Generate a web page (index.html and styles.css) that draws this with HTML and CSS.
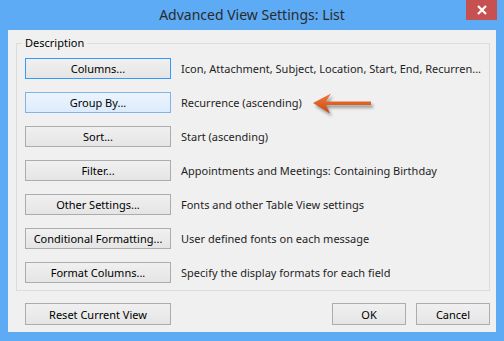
FILE: index.html
```html
<!DOCTYPE html>
<html lang="en">
<head>
    <meta charset="UTF-8">
    <title>Advanced View Settings: List</title>
    <link rel="stylesheet" href="styles.css">
</head>
<body>
    <div class="titlebar">
        <span></span>
        <h1>Advanced View Settings: List</h1>
        <div class="close">
            <svg width="10" height="10" viewBox="0 0 10 10"><path d="M1 1 L9 9 M9 1 L1 9" stroke="#fff" stroke-width="2.2"/></svg>
        </div>
    </div>

    <div class="content">
        <div class="group">
            <span class="legend">Description</span>

            <div class="row">
                <button class="btn focused">Columns...</button>
                <span class="desc">Icon, Attachment, Subject, Location, Start, End, Recurren...</span>
            </div>
            <div class="row">
                <button class="btn hover">Group By...</button>
                <span class="desc">Recurrence (ascending)</span>
                <svg class="arrow" width="64" height="26" viewBox="0 0 64 26">
                    <defs>
                        <linearGradient id="ag" x1="0" y1="0" x2="0" y2="1">
                            <stop offset="0" stop-color="#f07a3a"/>
                            <stop offset="1" stop-color="#c84a10"/>
                        </linearGradient>
                    </defs>
                    <path d="M1 13 L19 3.5 L14 11.5 L59 11.5 L59 15 L14 15 L18 23.5 Z" fill="url(#ag)"/>
                </svg>
            </div>
            <div class="row">
                <button class="btn">Sort...</button>
                <span class="desc">Start (ascending)</span>
            </div>
            <div class="row">
                <button class="btn">Filter...</button>
                <span class="desc">Appointments and Meetings: Containing Birthday</span>
            </div>
            <div class="row">
                <button class="btn">Other Settings...</button>
                <span class="desc">Fonts and other Table View settings</span>
            </div>
            <div class="row">
                <button class="btn">Conditional Formatting...</button>
                <span class="desc">User defined fonts on each message</span>
            </div>
            <div class="row">
                <button class="btn">Format Columns...</button>
                <span class="desc">Specify the display formats for each field</span>
            </div>
        </div>

        <div class="footer">
            <button class="btn">Reset Current View</button>
            <span class="spacer"></span>
            <button class="btn small">OK</button>
            <button class="btn small">Cancel</button>
        </div>
    </div>
</body>
</html>
```
FILE: styles.css
```css
body {
    margin: 0;
    width: 504px;
    height: 341px;
    overflow: hidden;
    background-color: #5eabf5;
    font-family: 'Noto Sans', 'Segoe UI', sans-serif;
    font-size: 11px;
    color: #1e1e1e;
}
.titlebar {
    height: 30px;
    display: grid;
    grid-template-columns: 1fr auto 1fr;
    align-items: start;
}
.titlebar h1 {
    margin: 0;
    font-weight: normal;
    font-size: 14px;
    line-height: 30px;
    color: #2a2a2a;
}
.close {
    justify-self: end;
    margin-right: 7px;
    width: 31px;
    height: 20px;
    background-color: #c75050;
    display: flex;
    align-items: center;
    justify-content: center;
}
.content {
    margin: 0 8px;
    height: 289px;
    padding-top: 13px;
    background-color: #f0f0f0;
}
.group {
    position: relative;
    margin: 0 6px 0 8px;
    height: 232px;
    padding: 14px 0 0 8px;
    border: 1px solid #dcdcdc;
}
.legend {
    position: absolute;
    top: -9px;
    left: 5px;
    padding: 0 3px;
    background-color: #f0f0f0;
    color: #000;
}
.row {
    display: flex;
    align-items: center;
    height: 21px;
    margin-bottom: 13px;
}
.btn {
    flex-shrink: 0;
    width: 146px;
    height: 21px;
    padding: 0;
    font-family: inherit;
    font-size: 11px;
    color: #000;
    border: 1px solid #acacac;
    background: linear-gradient(#f0f0f0, #e5e5e5);
}
.btn.focused {
    border-color: #3399ff;
}
.btn.hover {
    border-color: #7eb4ea;
    background: linear-gradient(#ecf4fc, #dcecfc);
}
.desc {
    margin-left: 10px;
    white-space: nowrap;
}
.arrow {
    margin-left: 10px;
    flex-shrink: 0;
    filter: drop-shadow(2px 3px 1.5px rgba(0,0,0,0.35));
}
.footer {
    display: flex;
    gap: 10px;
    margin-top: 12px;
    padding: 0 6px 0 17px;
}
.footer .btn {
    height: 22px;
}
.spacer {
    flex: 1;
}
.btn.small {
    width: 74px;
}
```
